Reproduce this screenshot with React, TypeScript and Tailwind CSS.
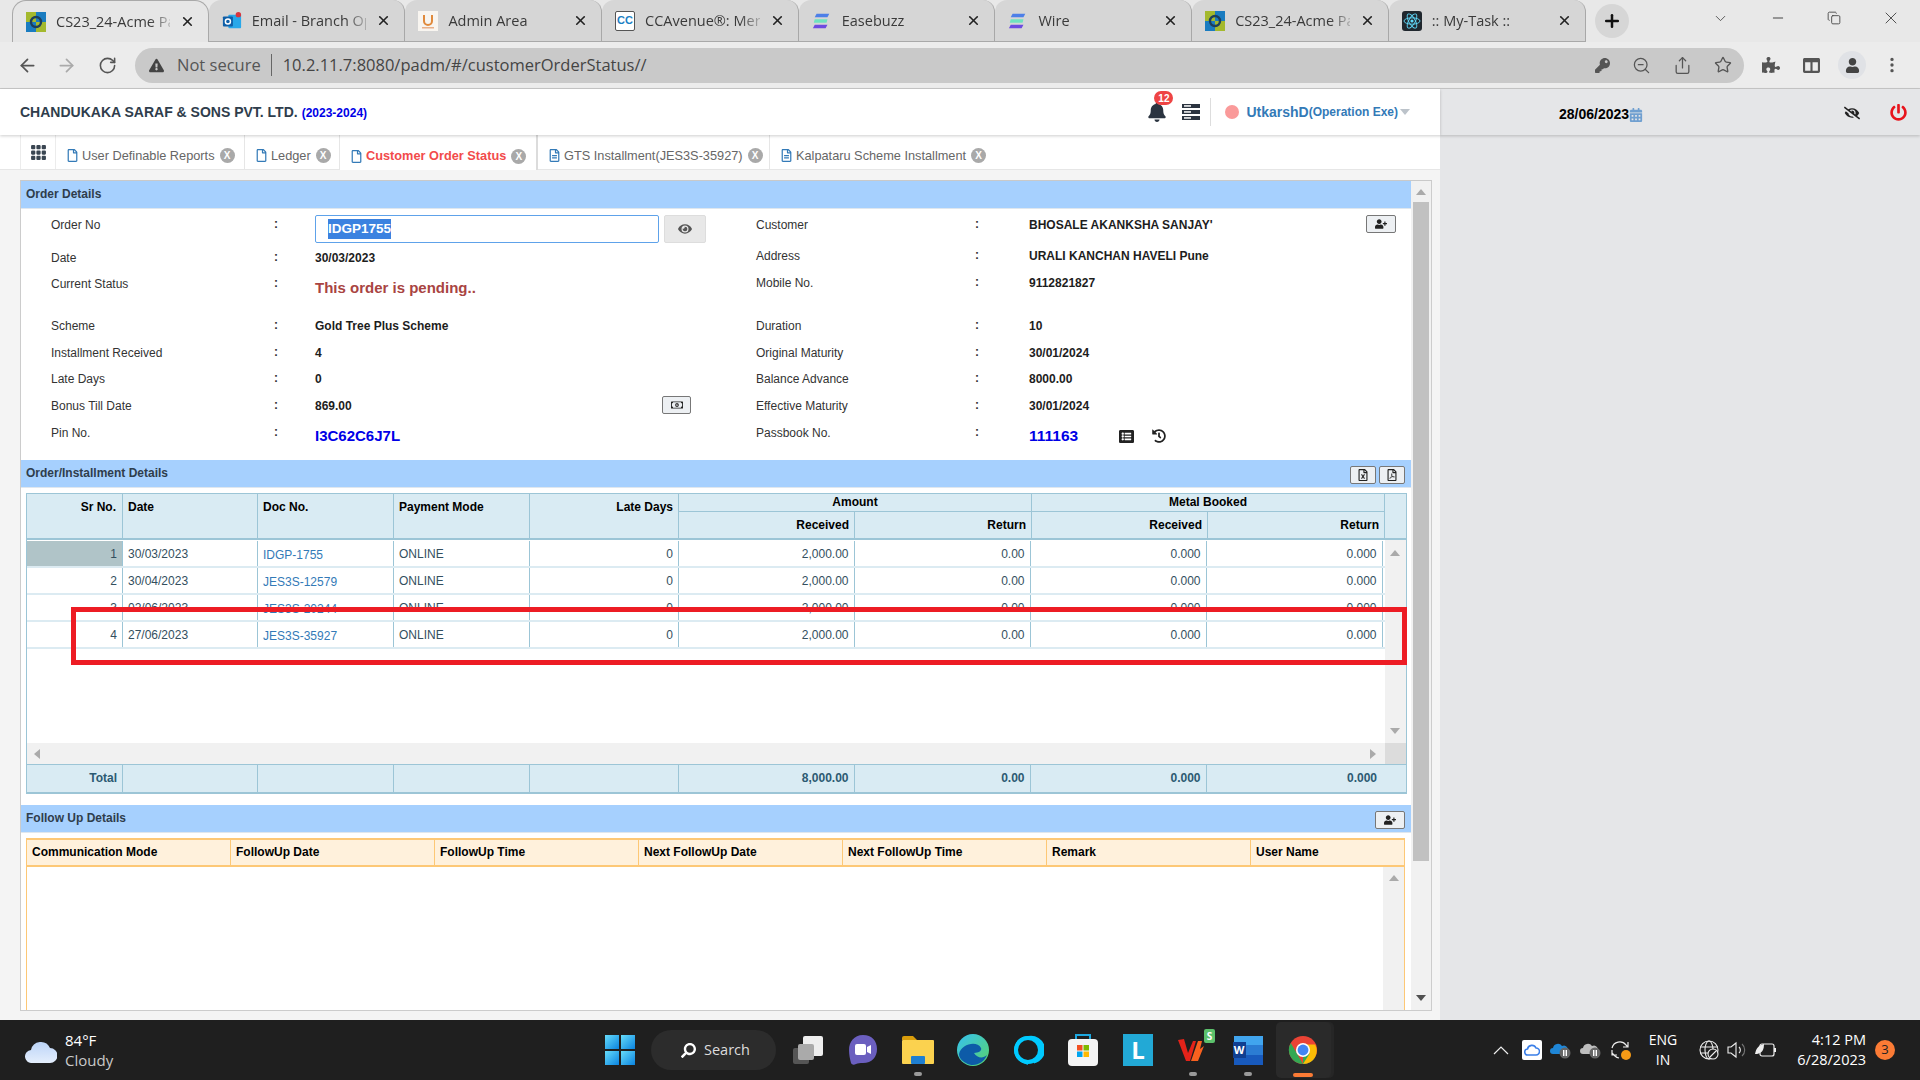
import React from "react";
import { ArrowLeft, ArrowRight, RotateCw, ZoomOut, Share, Star, ChevronDown, Minus, Plus, X, Copy } from "lucide-react";
import {
  FaBell, FaUserPlus, FaEye, FaPowerOff, FaEyeSlash, FaRegFile, FaRegFileAlt, FaRegMoneyBillAlt, FaHistory, FaListAlt,
  FaCalendarAlt, FaExclamationTriangle, FaPuzzlePiece, FaKey, FaUser, FaRegFileExcel, FaRegFilePdf, FaSearch, FaColumns,
} from "react-icons/fa";
import { BsGrid3X3GapFill, BsThreeDotsVertical } from "react-icons/bs";

const sans = "font-['Liberation_Sans',Arial,sans-serif]";
const ui = "font-['Open_Sans','Noto_Sans',sans-serif]";

function AcmeIcon() {
  return (
    <svg width="20" height="20" viewBox="0 0 20 20">
      <rect width="10" height="10" fill="#a4b92e" />
      <rect x="10" width="10" height="10" fill="#1a7cc0" />
      <rect y="10" width="10" height="10" fill="#1a7cc0" />
      <rect x="10" y="10" width="10" height="10" fill="#a4b92e" />
      <circle cx="10" cy="10" r="5" fill="none" stroke="#1d3f5c" strokeWidth="2.4" />
    </svg>
  );
}
function OutlookIcon() {
  return (
    <svg width="22" height="22" viewBox="0 0 22 22">
      <rect x="7" y="4" width="14" height="15" rx="1" fill="#28a8ea" />
      <rect x="1" y="6" width="11" height="11" rx="1" fill="#0f5fa8" />
      <circle cx="6.5" cy="11.5" r="2.8" fill="none" stroke="#fff" strokeWidth="1.6" />
      <circle cx="18" cy="4" r="3" fill="#d9363e" />
    </svg>
  );
}
function AdminIcon() {
  return (
    <svg width="20" height="20" viewBox="0 0 20 20">
      <rect width="20" height="20" fill="#f8f5f0" />
      <path d="M6 4v6a4 4 0 0 0 8 0V4" fill="none" stroke="#e08a3c" strokeWidth="2" />
      <rect x="4" y="16" width="12" height="1.5" fill="#e8b08a" />
    </svg>
  );
}
function CCIcon() {
  return (
    <div className={`flex h-[20px] w-[20px] items-center justify-center rounded-[2px] border border-[#555] bg-white text-[11px] font-bold text-[#1b7fc4] ${sans}`}>CC</div>
  );
}
function EaseIcon() {
  return (
    <svg width="22" height="20" viewBox="0 0 22 20">
      <path d="M5 2h14l-2 4H3z" fill="#4d7fe8" />
      <path d="M3 8h14l-1 4H2z" fill="#6fe3c0" />
      <path d="M3 14h14l-2 4H1z" fill="#6d4be0" />
    </svg>
  );
}
function ReactIcon() {
  return (
    <svg width="20" height="20" viewBox="0 0 20 20">
      <rect width="20" height="20" rx="3" fill="#20272e" />
      <g fill="none" stroke="#61dafb" strokeWidth="0.9">
        <ellipse cx="10" cy="10" rx="8" ry="3.2" />
        <ellipse cx="10" cy="10" rx="8" ry="3.2" transform="rotate(60 10 10)" />
        <ellipse cx="10" cy="10" rx="8" ry="3.2" transform="rotate(120 10 10)" />
      </g>
      <circle cx="10" cy="10" r="1.6" fill="#61dafb" />
    </svg>
  );
}

const browserTabs = [
  { icon: <AcmeIcon />, title: "CS23_24-Acme Pa", active: true },
  { icon: <OutlookIcon />, title: "Email - Branch Op" },
  { icon: <AdminIcon />, title: "Admin Area" },
  { icon: <CCIcon />, title: "CCAvenue®: Mer" },
  { icon: <EaseIcon />, title: "Easebuzz" },
  { icon: <EaseIcon />, title: "Wire" },
  { icon: <AcmeIcon />, title: "CS23_24-Acme Pa" },
  { icon: <ReactIcon />, title: ":: My-Task ::" },
];

function TabStrip() {
  return (
    <div className={`flex h-[42px] bg-[#e8e8e8] pl-[12px] ${ui}`}>
      <div className="flex h-[42px] border-b border-[#a9a9a9]">
        {browserTabs.map((t, i) => (
          <div
            key={i}
            className={
              t.active
                ? "relative z-10 flex h-[42px] w-[196.7px] items-center gap-[10px] rounded-t-[14px] border border-b-0 border-[#a9a9a9] bg-[#e6e6e6] pr-[13px] pl-[13px]"
                : "flex h-[41px] w-[196.7px] items-center gap-[10px] rounded-t-[12px] border-r border-[#a8a8a8] bg-[#d6d6d6] pr-[13px] pl-[13px]"
            }
          >
            <div className="flex w-[20px] shrink-0 items-center justify-center">{t.icon}</div>
            <div className="min-w-0 flex-1 text-[14.5px] whitespace-nowrap text-[#3a3a3a] [mask-image:linear-gradient(to_right,black_82%,rgba(0,0,0,0.25))]">{t.title}</div>
            <X size={15} strokeWidth={2.6} className="shrink-0 text-[#222]" />
          </div>
        ))}
      </div>
      <div className="ml-[9px] mt-[4px] flex h-[34px] w-[34px] items-center justify-center rounded-full bg-[#d6d6d6]">
        <Plus size={20} strokeWidth={3} className="text-[#111]" />
      </div>
      <div className="ml-[83px] flex h-[36px] items-center text-[#444]">
        <ChevronDown size={17} strokeWidth={1.2} />
        <Minus size={16} strokeWidth={1.5} className="ml-[41px]" />
        <Copy size={14} strokeWidth={1.5} className="ml-[41px]" />
        <X size={20} strokeWidth={1.1} className="ml-[40px]" />
      </div>
    </div>
  );
}

function Toolbar() {
  return (
    <div className={`flex h-[47px] items-center border-b border-[#c9c9c9] bg-[#ececec] ${ui}`}>
      <ArrowLeft size={21} strokeWidth={2} className="ml-[17px] text-[#555]" />
      <ArrowRight size={21} strokeWidth={2} className="ml-[18px] text-[#aaa]" />
      <RotateCw size={19} strokeWidth={2} className="ml-[21px] text-[#555]" />
      <div className="ml-[18px] flex h-[35px] w-[1609px] items-center rounded-full bg-[#c9c9c9] pl-[14px] pr-[12px]">
        <FaExclamationTriangle size={15} className="text-[#444]" />
        <span className="ml-[13px] text-[16.5px] text-[#555]">Not secure</span>
        <span className="ml-[10px] h-[22px] w-px bg-[#666]" />
        <span className="ml-[11px] text-[16.5px] text-[#444]">10.2.11.7:8080/padm/#/customerOrderStatus//</span>
        <div className="ml-auto flex items-center gap-[22px] text-[#555]">
          <FaKey size={15} />
          <ZoomOut size={19} strokeWidth={1.6} />
          <Share size={19} strokeWidth={1.6} />
          <Star size={18} strokeWidth={1.8} />
        </div>
      </div>
      <FaPuzzlePiece size={18} className="ml-[18px] text-[#555]" />
      <FaColumns size={17} className="ml-[23px] text-[#555]" />
      <div className="ml-[18px] flex h-[28px] w-[28px] items-center justify-center rounded-full bg-[#e0e2e6]">
        <FaUser size={15} className="text-[#444]" />
      </div>
      <BsThreeDotsVertical size={18} className="ml-[17px] text-[#555]" />
    </div>
  );
}

function Header() {
  return (
    <div className={`relative z-10 flex h-[46px] shrink-0 items-center bg-white pl-[20px] shadow-[0_1px_3px_rgba(0,0,0,0.2)] ${sans}`}>
      <span className="mt-[1px] text-[14px] font-bold text-[#2f3d4c]">CHANDUKAKA SARAF &amp; SONS PVT. LTD.</span>
      <span className="mt-[1px] ml-[4px] text-[12px] font-bold text-[#0000e6]">(2023-2024)</span>
      <div className="relative ml-auto flex items-center">
        <FaBell size={20} className="text-[#2b3440]" />
        <span className="absolute top-[-11px] left-[7px] flex h-[14px] w-[19px] items-center justify-center rounded-full bg-[#ee4444] text-[10px] font-bold text-white">12</span>
      </div>
      <svg width="18" height="16" viewBox="0 0 18 16" className="ml-[15px]">
        <rect width="18" height="4" fill="#2b3440" />
        <rect y="6" width="18" height="4" fill="#2b3440" />
        <rect y="12" width="18" height="4" fill="#2b3440" />
        <rect x="2" y="1.2" width="7" height="1.5" fill="#fff" />
        <rect x="2" y="7.2" width="7" height="1.5" fill="#fff" />
        <rect x="2" y="13.2" width="7" height="1.5" fill="#fff" />
      </svg>
      <span className="ml-[10px] h-[28px] w-px bg-[#dddddd]" />
      <span className="ml-[14px] h-[14px] w-[14px] rounded-full bg-[#fa9a9a]" />
      <span className="ml-[7px] text-[14px] font-bold text-[#337ab7]">UtkarshD</span>
      <span className="text-[12px] font-bold text-[#337ab7]">(Operation Exe)</span>
      <svg width="10" height="6" viewBox="0 0 10 6" className="ml-[2px] mr-[30px]"><polygon points="0,0 10,0 5,6" fill="#bcc3ca" /></svg>
    </div>
  );
}

const appTabs = [
  { name: "User Definable Reports", w: "w-[189px]", icon: 0, sep: "border-r border-[#e6e6e6]" },
  { name: "Ledger", w: "w-[95px]", icon: 0, sep: "border-r border-[#e6e6e6]" },
  { name: "Customer Order Status", w: "w-[198px]", active: true, icon: 0, sep: "border-r-2 border-[#dcdcdc]" },
  { name: "GTS Installment(JES3S-35927)", w: "w-[232px]", icon: 1, sep: "border-r border-[#e6e6e6]" },
  { name: "Kalpataru Scheme Installment", w: "w-[225px]", icon: 1, sep: "" },
];

function AppTabs() {
  return (
    <div className={`flex h-[35px] shrink-0 border-b border-[#e6e6e6] bg-white pl-[20px] ${sans}`}>
      <div className="flex w-[36px] items-center justify-center border-x border-[#ececec]">
        <BsGrid3X3GapFill size={17} className="text-[#3a4652]" />
      </div>
      {appTabs.map((t) => (
        <div
          key={t.name}
          className={`flex h-[35px] items-center pt-[6px] pl-[10px] ${t.w} ${t.sep} ${t.active ? "h-[36px] bg-white font-bold text-[#f24b4b]" : "text-[#666]"}`}
        >
          {t.icon ? <FaRegFileAlt size={13} className="shrink-0 text-[#337ab7]" /> : <FaRegFile size={13} className="shrink-0 text-[#337ab7]" />}
          <span className="ml-[3px] text-[12.75px] whitespace-nowrap">{t.name}</span>
          <span className="ml-[5px] flex h-[15px] w-[15px] shrink-0 items-center justify-center rounded-full bg-[#a9a9a9] text-[10px] font-bold text-white">X</span>
        </div>
      ))}
    </div>
  );
}

function Bar({ title, children }: { title: string; children?: React.ReactNode }) {
  return (
    <div className={`flex h-[28px] shrink-0 items-center justify-between border-b border-[#dfe7ef] bg-[#a6d0fe] pl-[5px] pr-[6px] ${sans}`}>
      <span className="mb-[2px] text-[12px] font-bold text-[#2f3d4c]">{title}</span>
      {children}
    </div>
  );
}

function SmallBtn({ w, children }: { w: string; children: React.ReactNode }) {
  return (
    <div className={`flex h-[18px] items-center justify-center rounded-[2px] border border-[#777] bg-[#edf0f3] text-[#222] ${w}`}>{children}</div>
  );
}

function Row({
  label, h, pt, labelW, colonW, children,
}: { label: string; h: string; pt: string; labelW: string; colonW: string; children?: React.ReactNode }) {
  return (
    <div className={`flex items-start ${h}`}>
      <div className={`${labelW} shrink-0 text-[12px] leading-[16px] text-[#333] ${pt}`}>{label}</div>
      <div className={`${colonW} shrink-0 text-[12px] leading-[14px] font-bold text-[#333] ${pt}`}>:</div>
      <div className="min-w-0 flex-1">{children}</div>
    </div>
  );
}

const val = "text-[12px] leading-[16px] font-bold text-[#1d1d1d]";

function OrderDetails() {
  const L = { labelW: "w-[223px]", colonW: "w-[41px]" };
  const R = { labelW: "w-[219px]", colonW: "w-[54px]" };
  return (
    <div className={`flex h-[251px] shrink-0 ${sans}`}>
      <div className="w-[735px] shrink-0 pl-[30px]">
        <Row {...L} label="Order No" h="h-[36px]" pt="pt-[8px]">
          <div className="mt-[6px] flex">
            <div className="flex h-[28px] w-[344px] items-center rounded-[2px] border border-[#5ea2ea] pl-[12px]">
              <span className="bg-[#3b82e0] text-[13.5px] font-bold text-white">IDGP1755</span>
            </div>
            <div className="ml-[5px] flex h-[28px] w-[42px] items-center justify-center rounded-[2px] border border-[#dddddd] bg-[#e8e8e8]">
              <FaEye size={14} className="text-[#555]" />
            </div>
          </div>
        </Row>
        <Row {...L} label="Date" h="h-[30px]" pt="pt-[5px]"><div className={`pt-[5px] ${val}`}>30/03/2023</div></Row>
        <Row {...L} label="Current Status" h="h-[37px]" pt="pt-[1px]">
          <div className="pt-[4px] text-[15px] leading-[18px] font-bold text-[#a94442]">This order is pending..</div>
        </Row>
        <Row {...L} label="Scheme" h="h-[27px]" pt="pt-[6px]"><div className={`pt-[6px] ${val}`}>Gold Tree Plus Scheme</div></Row>
        <Row {...L} label="Installment Received" h="h-[26px]" pt="pt-[6px]"><div className={`pt-[6px] ${val}`}>4</div></Row>
        <Row {...L} label="Late Days" h="h-[27px]" pt="pt-[6px]"><div className={`pt-[6px] ${val}`}>0</div></Row>
        <Row {...L} label="Bonus Till Date" h="h-[27px]" pt="pt-[6px]">
          <div className="flex w-[376px] items-start justify-between pt-[4px]">
            <span className={`pt-[2px] ${val}`}>869.00</span>
            <SmallBtn w="w-[29px]"><FaRegMoneyBillAlt size={12} /></SmallBtn>
          </div>
        </Row>
        <Row {...L} label="Pin No." h="h-[41px]" pt="pt-[6px]">
          <div className="pt-[8px] text-[15px] leading-[18px] font-bold text-[#0000e6]">I3C62C6J7L</div>
        </Row>
      </div>
      <div className="flex-1">
        <Row {...R} label="Customer" h="h-[36px]" pt="pt-[8px]">
          <div className="flex items-start justify-between pt-[6px] pr-[15px]">
            <span className={`pt-[2px] ${val}`}>BHOSALE AKANKSHA SANJAY'</span>
            <SmallBtn w="w-[30px]"><FaUserPlus size={12} /></SmallBtn>
          </div>
        </Row>
        <Row {...R} label="Address" h="h-[30px]" pt="pt-[3px]"><div className={`pt-[3px] ${val}`}>URALI KANCHAN HAVELI Pune</div></Row>
        <Row {...R} label="Mobile No." h="h-[37px]" pt="pt-[0px]"><div className={val}>9112821827</div></Row>
        <Row {...R} label="Duration" h="h-[27px]" pt="pt-[6px]"><div className={`pt-[6px] ${val}`}>10</div></Row>
        <Row {...R} label="Original Maturity" h="h-[26px]" pt="pt-[6px]"><div className={`pt-[6px] ${val}`}>30/01/2024</div></Row>
        <Row {...R} label="Balance Advance" h="h-[27px]" pt="pt-[6px]"><div className={`pt-[6px] ${val}`}>8000.00</div></Row>
        <Row {...R} label="Effective Maturity" h="h-[27px]" pt="pt-[6px]"><div className={`pt-[6px] ${val}`}>30/01/2024</div></Row>
        <Row {...R} label="Passbook No." h="h-[41px]" pt="pt-[6px]">
          <div className="flex items-center pt-[8px]">
            <span className="w-[90px] text-[15.5px] leading-[18px] font-bold text-[#0000e6]">111163</span>
            <FaListAlt size={15} className="text-[#222]" />
            <FaHistory size={14} className="ml-[18px] text-[#222]" />
          </div>
        </Row>
      </div>
    </div>
  );
}

const rows = [
  ["1", "30/03/2023", "IDGP-1755"],
  ["2", "30/04/2023", "JES3S-12579"],
  ["3", "02/06/2023", "JES3S-20244"],
  ["4", "27/06/2023", "JES3S-35927"],
];

const thBorder = "border-r border-[#9cc5d6]";
const th = `flex text-[12px] font-bold text-black ${thBorder}`;
const bodyCols = "grid-cols-[96px_135px_136px_136px_149px_175.5px_176px_176px_176px]";

function Tri({ dir, color = "#aaa" }: { dir: "u" | "d" | "l" | "r"; color?: string }) {
  const pts = { u: "0,6 10,6 5,0", d: "0,0 10,0 5,6", l: "6,0 6,10 0,5", r: "0,0 0,10 6,5" }[dir];
  const vb = dir === "u" || dir === "d" ? [10, 6] : [6, 10];
  return (
    <svg width={vb[0]} height={vb[1]} viewBox={`0 0 ${vb[0]} ${vb[1]}`}><polygon points={pts} fill={color} /></svg>
  );
}

function InstallmentTable() {
  return (
    <div className={`ml-[5px] w-[1381px] shrink-0 border border-b-0 border-[#9cc5d6] ${sans}`}>
      <div className="grid grid-cols-[96px_135px_136px_136px_149px_176px_177px_176px_177px_21px] grid-rows-[18px_26px] border-b-2 border-[#9cc5d6] bg-[#d9ebf3]">
        <div className={`row-span-2 justify-end pt-[4px] pr-[6px] ${th}`}>Sr No.</div>
        <div className={`row-span-2 pt-[4px] pl-[5px] ${th}`}>Date</div>
        <div className={`row-span-2 pt-[4px] pl-[5px] ${th}`}>Doc No.</div>
        <div className={`row-span-2 pt-[4px] pl-[5px] ${th}`}>Payment Mode</div>
        <div className={`row-span-2 justify-end pt-[4px] pr-[5px] ${th}`}>Late Days</div>
        <div className={`col-span-2 items-center justify-center border-b border-[#9cc5d6] pb-[2px] ${th}`}>Amount</div>
        <div className={`col-span-2 items-center justify-center border-b border-[#9cc5d6] pb-[2px] ${th}`}>Metal Booked</div>
        <div className="row-span-2" />
        {["Received", "Return", "Received", "Return"].map((x, i) => (
          <div key={i} className={`items-center justify-end pr-[5px] ${th}`}>{x}</div>
        ))}
      </div>
      <div className="flex h-[203px]">
        <div className="w-[1358px] bg-white pt-px">
          {rows.map((r, i) => (
            <div key={i} className={`grid h-[27px] border-b-2 border-[#dcebf2] text-[12px] text-[#334f5e] ${bodyCols}`}>
              <div className={`flex items-center justify-end border-r border-[#9cc5d6] pr-[5px] ${i === 0 ? "bg-[#b0c4c8]" : ""}`}>{r[0]}</div>
              <div className="flex items-center border-r border-[#9cc5d6] pl-[5px]">{r[1]}</div>
              <div className="flex items-center border-r border-[#9cc5d6] pt-[3px] pl-[5px] text-[#337ab7]">{r[2]}</div>
              <div className="flex items-center border-r border-[#9cc5d6] pl-[5px]">ONLINE</div>
              <div className="flex items-center justify-end border-r border-[#9cc5d6] pr-[5px]">0</div>
              <div className="flex items-center justify-end border-r border-[#9cc5d6] pr-[5px]">2,000.00</div>
              <div className="flex items-center justify-end border-r border-[#9cc5d6] pr-[5px]">0.00</div>
              <div className="flex items-center justify-end border-r border-[#9cc5d6] pr-[5px]">0.000</div>
              <div className="flex items-center justify-end border-r border-[#9cc5d6] pr-[5px]">0.000</div>
            </div>
          ))}
        </div>
        <div className="flex flex-1 flex-col items-center justify-between bg-[#f1f1f1] pt-[10px] pb-[9px] pr-[2px]">
          <Tri dir="u" />
          <Tri dir="d" />
        </div>
      </div>
      <div className="flex h-[21px]">
        <div className="flex flex-1 items-center justify-between bg-[#f1f1f1] pr-[9px] pl-[7px]">
          <Tri dir="l" />
          <Tri dir="r" />
        </div>
        <div className="w-[21px] bg-[#dcdcdc]" />
      </div>
      <div className="grid h-[30px] grid-cols-[96px_135px_136px_136px_149px_175.5px_176px_176px_176px_22.5px] border-y-2 border-t-[1px] border-[#9cc5d6] bg-[#d9ebf3] pb-0 text-[12px] font-bold text-[#2c5a72]">
        <div className="flex items-center justify-end border-r border-[#9cc5d6] pr-[5px] pb-[1px]">Total</div>
        <div className="border-r border-[#9cc5d6]" />
        <div className="border-r border-[#9cc5d6]" />
        <div className="border-r border-[#9cc5d6]" />
        <div className="border-r border-[#9cc5d6]" />
        <div className="flex items-center justify-end border-r border-[#9cc5d6] pr-[5px] pb-[1px]">8,000.00</div>
        <div className="flex items-center justify-end border-r border-[#9cc5d6] pr-[5px] pb-[1px]">0.00</div>
        <div className="flex items-center justify-end border-r border-[#9cc5d6] pr-[5px] pb-[1px]">0.000</div>
        <div className="col-span-2 flex items-center justify-end pr-[28px] pb-[1px]">0.000</div>
      </div>
    </div>
  );
}

const followCols = ["Communication Mode", "FollowUp Date", "FollowUp Time", "Next FollowUp Date", "Next FollowUp Time", "Remark", "User Name"];

function FollowUp() {
  return (
    <div className={`ml-[5px] mt-[5px] flex min-h-0 w-[1379px] flex-1 flex-col border-x border-[#fdc876] ${sans}`}>
      <div className="grid h-[29px] shrink-0 grid-cols-[204px_204px_204px_204px_204px_204px_153px] border-y-2 border-[#fdc876] bg-[#fff1dc]">
        {followCols.map((c, i) => (
          <div key={c} className={`flex items-center pl-[5px] pb-[1px] text-[12px] font-bold text-black ${i < 6 ? "border-r border-[#fdc876]" : ""}`}>{c}</div>
        ))}
      </div>
      <div className="flex min-h-0 flex-1 justify-end">
        <div className="flex w-[21px] justify-center bg-[#f1f1f1] pt-[8px]">
          <Tri dir="u" />
        </div>
      </div>
    </div>
  );
}

function PageScrollbar() {
  return (
    <div className="flex w-[20px] shrink-0 flex-col items-center bg-[#f1f1f1]">
      <div className="flex h-[21px] items-center"><Tri dir="u" /></div>
      <div className="h-[659px] w-[16px] bg-[#c1c1c1]" />
      <div className="flex flex-1 items-end pb-[9px]"><Tri dir="d" color="#505050" /></div>
    </div>
  );
}

function Main() {
  return (
    <div className="flex w-[1440px] shrink-0 flex-col">
      <Header />
      <AppTabs />
      <div className="min-h-0 flex-1 bg-[#f4f4f4] pt-[10px] pl-[20px]">
        <div className="flex h-[831px] w-[1412px] overflow-hidden border border-[#cccccc] border-t-[#c9c9c9] bg-white">
          <div className="flex w-[1390px] shrink-0 flex-col">
            <Bar title="Order Details" />
            <OrderDetails />
            <Bar title="Order/Installment Details">
              <div className="mt-[2px] flex gap-[3px]">
                <SmallBtn w="w-[26px]"><FaRegFileExcel size={12} /></SmallBtn>
                <SmallBtn w="w-[26px]"><FaRegFilePdf size={12} /></SmallBtn>
              </div>
            </Bar>
            <div className="h-[5px] shrink-0" />
            <InstallmentTable />
            <div className="h-[11px] shrink-0" />
            <Bar title="Follow Up Details">
              <div className="mt-[3px]"><SmallBtn w="w-[30px]"><FaUserPlus size={12} /></SmallBtn></div>
            </Bar>
            <FollowUp />
          </div>
          <PageScrollbar />
        </div>
      </div>
    </div>
  );
}

function RightPane() {
  return (
    <div className={`flex-1 bg-[#e5e6e8] ${sans}`}>
      <div className="relative flex h-[46px] items-center pl-[119px] shadow-[0_1px_3px_rgba(0,0,0,0.2)]">
        <span className="mt-[5px] text-[14px] font-bold text-black">28/06/2023</span>
        <FaCalendarAlt size={14} className="mt-[5px] text-[#6f9fd0]" />
        <FaEyeSlash size={16} className="ml-[201px] mt-[2px] text-[#222]" />
        <FaPowerOff size={17} className="ml-[30px] text-[#e8141c]" />
      </div>
    </div>
  );
}

function Windows() {
  return (
    <svg width="30" height="30" viewBox="0 0 30 30">
      <defs>
        <linearGradient id="w" x1="0" y1="0" x2="1" y2="1"><stop offset="0" stopColor="#66dcfa" /><stop offset="1" stopColor="#0a83e0" /></linearGradient>
      </defs>
      <rect width="14" height="14" fill="url(#w)" />
      <rect x="16" width="14" height="14" fill="url(#w)" />
      <rect y="16" width="14" height="14" fill="url(#w)" />
      <rect x="16" y="16" width="14" height="14" fill="url(#w)" />
    </svg>
  );
}

const taskIcons: { el: React.ReactNode; dot?: "g" | "o" }[] = [
  { el: (
    <svg width="30" height="28" viewBox="0 0 30 28">
      <rect x="0" y="12" width="16" height="16" rx="2" fill="#555" />
      <rect x="10" y="0" width="20" height="20" rx="2" fill="#eee" />
      <rect x="5" y="8" width="16" height="16" rx="2" fill="#aaa" />
    </svg>
  ) },
  { el: (
    <svg width="30" height="32" viewBox="0 0 30 32">
      <path d="M15 1C6 1 1 8 1 16c0 5 1 9 2 13 1 2 3 2 5 1 2-1 4-1 7-1 9 0 14-6 14-14S24 1 15 1z" fill="#6b5fbf" />
      <rect x="7" y="10" width="11" height="11" rx="2" fill="#fff" />
      <path d="M19 13l4-2v9l-4-2z" fill="#fff" />
    </svg>
  ) },
  { el: (
    <svg width="32" height="28" viewBox="0 0 32 28">
      <path d="M0 2a2 2 0 0 1 2-2h9l4 4H0z" fill="#d99d0b" />
      <rect y="4" width="32" height="24" rx="1" fill="#fbd24f" />
      <rect x="9" y="20" width="14" height="8" rx="1" fill="#1f7fd1" />
    </svg>
  ), dot: "g" },
  { el: (
    <svg width="32" height="32" viewBox="0 0 32 32">
      <defs><linearGradient id="e" x1="0" y1="0" x2="1" y2="1"><stop offset="0" stopColor="#35c1f1" /><stop offset="1" stopColor="#59d36b" /></linearGradient></defs>
      <circle cx="16" cy="16" r="16" fill="url(#e)" />
      <path d="M2 20C4 10 20 6 24 14c1 3-2 5-7 5 3 5 9 6 13 2-3 8-13 13-21 8C5 27 2 24 2 20z" fill="#0d5ba8" />
    </svg>
  ) },
  { el: (
    <svg width="32" height="32" viewBox="0 0 32 32">
      <path d="M16 2a14 14 0 0 0-6 26.6L16 31l-1-4a11 11 0 1 1 6-1l1 3.5A14 14 0 0 0 16 2z" fill="#00caff" />
      <circle cx="16" cy="16" r="12" fill="none" stroke="#00caff" strokeWidth="4" />
    </svg>
  ) },
  { el: (
    <svg width="30" height="32" viewBox="0 0 30 32">
      <path d="M8 5V1h14v4" fill="none" stroke="#1da8e0" strokeWidth="2" />
      <rect y="5" width="30" height="27" rx="4" fill="#f4f4f4" />
      <rect x="9" y="11" width="5.5" height="5.5" fill="#f25022" />
      <rect x="15.5" y="11" width="5.5" height="5.5" fill="#7fba00" />
      <rect x="9" y="17.5" width="5.5" height="5.5" fill="#00a4ef" />
      <rect x="15.5" y="17.5" width="5.5" height="5.5" fill="#ffb900" />
    </svg>
  ) },
  { el: (
    <div className="flex h-[32px] w-[30px] items-center justify-center bg-[#22a9d6] text-[24px] font-bold text-white">L</div>
  ) },
  { el: (
    <div className="relative">
      <svg width="30" height="30" viewBox="0 0 30 30">
        <path d="M0 5l6-1 4 14 5-12h3L12 26H8z" fill="#e4231a" />
        <path d="M13 26L20 6h4l-2 8 4-3-6 15z" fill="#f9611f" />
      </svg>
      <span className="absolute top-[-6px] right-[-7px] flex h-[14px] w-[11px] items-center justify-center rounded-[2px] bg-[#5cc16c] text-[10px] font-bold text-white">S</span>
    </div>
  ), dot: "g" },
  { el: (
    <div className="relative">
      <svg width="29" height="30" viewBox="0 0 29 30">
        <rect width="29" height="10" y="1" fill="#41a5ee" />
        <rect width="29" height="10" y="10" fill="#2b7cd3" />
        <rect width="29" height="10" y="20" fill="#185abd" />
      </svg>
      <span className="absolute top-[7px] left-[-1px] flex h-[16px] w-[13px] items-center justify-center bg-[#103f91] text-[11px] font-bold text-white">W</span>
    </div>
  ), dot: "g" },
  { el: (
    <svg width="30" height="30" viewBox="0 0 32 32">
      <circle cx="16" cy="16" r="15" fill="#ea4335" />
      <path d="M16 16L29 23.5A15 15 0 0 1 16 31L3 8.5A15 15 0 0 0 3 23.5 15 15 0 0 0 16 31z" fill="#34a853" />
      <path d="M16 10h13a15 15 0 0 1 0 13.5A15 15 0 0 1 16 31l7-11z" fill="#fbbc05" />
      <circle cx="16" cy="16" r="7.5" fill="#fff" />
      <circle cx="16" cy="16" r="5.8" fill="#4285f4" />
    </svg>
  ), dot: "o" },
];

function Tray() {
  return (
    <div className={`ml-auto flex items-center text-white ${ui}`}>
      <svg width="16" height="10" viewBox="0 0 16 10"><path d="M1 9l7-7 7 7" fill="none" stroke="#eee" strokeWidth="1.2" /></svg>
      <div className="ml-[13px] flex h-[20px] w-[20px] items-center justify-center rounded-[2px] bg-white">
        <svg width="16" height="12" viewBox="0 0 16 12"><path d="M4 11a3 3 0 0 1-.5-6 4.5 4.5 0 0 1 8.5-1 3.5 3.5 0 0 1 0 7z" fill="none" stroke="#3b7fe8" strokeWidth="1.6" /></svg>
      </div>
      <svg width="22" height="20" viewBox="0 0 22 20" className="ml-[8px]">
        <path d="M3 14a3 3 0 0 1 0-6 5 5 0 0 1 9-2 4 4 0 0 1 5 6v2z" fill="#1f86d6" />
        <circle cx="15" cy="13" r="5.5" fill="#666" />
        <rect x="13" y="10" width="1.4" height="6" fill="#fff" /><rect x="15.6" y="10" width="1.4" height="6" fill="#fff" />
      </svg>
      <svg width="22" height="20" viewBox="0 0 22 20" className="ml-[8px]">
        <path d="M3 14a3 3 0 0 1 0-6 5 5 0 0 1 9-2 4 4 0 0 1 5 6v2z" fill="#bdbdbd" />
        <circle cx="15" cy="13" r="5.5" fill="#666" />
        <rect x="13" y="10" width="1.4" height="6" fill="#fff" /><rect x="15.6" y="10" width="1.4" height="6" fill="#fff" />
      </svg>
      <svg width="22" height="22" viewBox="0 0 22 22" className="ml-[8px]">
        <path d="M2 9a8 8 0 0 1 14-3l2 2m0-5v5h-5M2 14l3 3a8 8 0 0 0 4 2m-7-8v5h5" fill="none" stroke="#eee" strokeWidth="1.2" />
        <circle cx="16" cy="16" r="5" fill="#f59a16" />
      </svg>
      <div className="ml-[13px] w-[36px] text-center text-[14px] leading-[20px]">ENG<br />IN</div>
      <svg width="20" height="20" viewBox="0 0 20 20" className="ml-[18px]">
        <g fill="none" stroke="#eee" strokeWidth="1.1"><circle cx="10" cy="10" r="9" /><ellipse cx="10" cy="10" rx="4" ry="9" /><path d="M1 7h18M1 13h18" /></g>
        <circle cx="14" cy="14" r="5" fill="#1f1f1f" stroke="#eee" strokeWidth="1.1" />
        <path d="M11 17l6-6" stroke="#eee" strokeWidth="1.1" />
      </svg>
      <svg width="20" height="18" viewBox="0 0 20 18" className="ml-[8px]">
        <path d="M1 6h3l5-4v14l-5-4H1z" fill="none" stroke="#eee" strokeWidth="1.1" />
        <path d="M12 6a4 4 0 0 1 0 6" fill="none" stroke="#eee" strokeWidth="1.1" />
        <path d="M15 3a8 8 0 0 1 0 12" fill="none" stroke="#777" strokeWidth="1.1" />
      </svg>
      <svg width="22" height="16" viewBox="0 0 22 16" className="ml-[8px]">
        <rect x="5" y="2" width="14" height="12" rx="2" fill="none" stroke="#eee" strokeWidth="1.2" />
        <rect x="19" y="6" width="2" height="4" fill="#eee" />
        <path d="M0 12C1 6 4 3 9 2c0 6-2 9-7 10z" fill="#eee" />
      </svg>
      <div className="ml-[17px] w-[72px] text-right text-[14.5px] leading-[20px] whitespace-nowrap">4:12 PM<br />6/28/2023</div>
      <div className="mr-[25px] ml-[9px] flex h-[20px] w-[20px] items-center justify-center rounded-full bg-[#fb7b35] text-[13px] text-[#222]">3</div>
    </div>
  );
}

function Taskbar() {
  return (
    <div className={`flex h-[60px] shrink-0 items-center bg-[#1f1f1f] ${ui}`}>
      <div className="flex w-[596px] shrink-0 items-center pl-[25px]">
        <svg width="32" height="26" viewBox="0 0 32 26">
          <defs><linearGradient id="c" x1="0" y1="0" x2="0" y2="1"><stop offset="0" stopColor="#bcd4f8" /><stop offset="1" stopColor="#e4eefc" /></linearGradient></defs>
          <path d="M7 26a6.5 6.5 0 0 1-1-13A10 10 0 0 1 25 11a7.5 7.5 0 0 1 0 15z" fill="url(#c)" />
        </svg>
        <div className="ml-[8px] text-[15px] leading-[20px]">
          <div className="text-white">84°F</div>
          <div className="text-[#c9c9c9]">Cloudy</div>
        </div>
      </div>
      <div className="flex w-[48px] shrink-0 justify-center"><Windows /></div>
      <div className="ml-[7px] flex h-[40px] w-[125px] shrink-0 items-center rounded-full bg-[#2c2c2c] pl-[30px]">
        <FaSearch size={15} className="scale-x-[-1] text-white" />
        <span className="ml-[8px] text-[14.5px] text-[#ddd]">Search</span>
      </div>
      <div className="ml-[4.5px] flex">
        {taskIcons.map((t, i) => (
          <div key={i} className={`relative flex h-[56px] w-[55px] items-center justify-center ${t.dot === "o" ? "rounded-[5px] bg-[#2a2a2a] shadow-[3px_0_0_#262626]" : ""}`}>
            {t.el}
            {t.dot === "g" && <span className="absolute bottom-[2px] h-[4px] w-[8px] rounded-full bg-[#9a9a9a]" />}
            {t.dot === "o" && <span className="absolute bottom-[1px] h-[4px] w-[20px] rounded-full bg-[#fb7b35]" />}
          </div>
        ))}
      </div>
      <Tray />
    </div>
  );
}

export default function App() {
  return (
    <div className="relative flex h-[1080px] w-[1920px] flex-col overflow-hidden bg-white">
      <TabStrip />
      <Toolbar />
      <div className="flex min-h-0 flex-1">
        <Main />
        <RightPane />
      </div>
      <Taskbar />
      <div className="absolute top-[607px] left-[71px] h-[58px] w-[1336px] border-[5px] border-[#ed1c24]" />
    </div>
  );
}
